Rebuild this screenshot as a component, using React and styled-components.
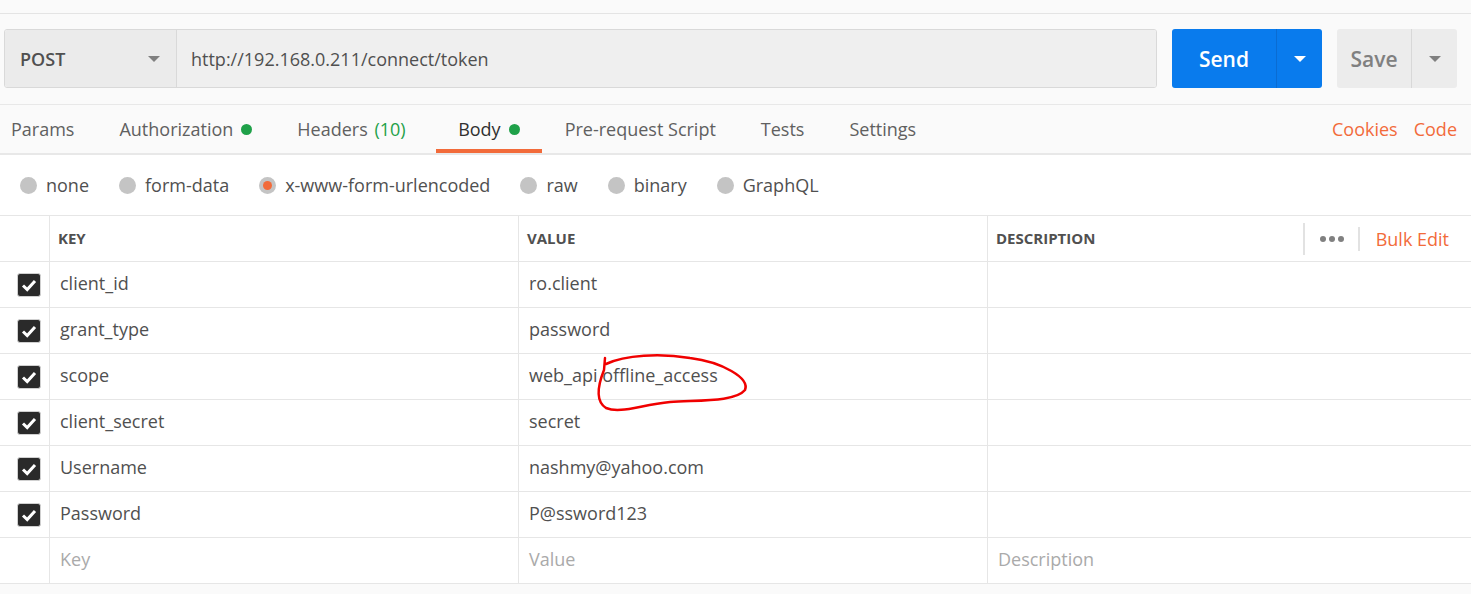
import React from "react";
import styled, { createGlobalStyle } from "styled-components";

const GlobalStyle = createGlobalStyle`
  html, body {
    margin: 0;
    padding: 0;
    background: #fafafa;
  }
  body {
    font-family: "Open Sans", "Liberation Sans", sans-serif;
    color: #505050;
  }
`;

const orange = "#f26b3a";
const green = "#1fa149";
const line = "#e6e6e6";

const Page = styled.div`
  position: relative;
  width: 1471px;
  height: 594px;
  overflow: hidden;
  background: #fafafa;
`;

const TopStrip = styled.div`
  height: 13px;
  border-bottom: 1px solid #e4e4e4;
`;

const RequestBar = styled.div`
  display: flex;
  align-items: center;
  padding: 15px 14px 16px 4px;
  border-bottom: 1px solid #e8e8e8;
`;

const UrlGroup = styled.div`
  flex: 1;
  display: flex;
  height: 59px;
  box-sizing: border-box;
  border: 1px solid #d9d9d9;
  border-radius: 3px;
  overflow: hidden;
`;

const MethodSelect = styled.div`
  width: 172px;
  box-sizing: border-box;
  display: flex;
  align-items: center;
  justify-content: space-between;
  padding: 0 16px 0 15px;
  background: #ebebeb;
  border-right: 1px solid #d9d9d9;
  font-size: 18px;
  font-weight: 600;
  color: #505050;
`;

const UrlInput = styled.div`
  flex: 1;
  display: flex;
  align-items: center;
  padding-left: 14px;
  background: #efefef;
  font-size: 18px;
  color: #505050;
`;

const Caret = styled.span`
  width: 0;
  height: 0;
  border-left: 6px solid transparent;
  border-right: 6px solid transparent;
  border-top: 6px solid ${(p) => p.color || "#808080"};
`;

const SplitButton = styled.div`
  display: flex;
  height: 59px;
  margin-left: ${(p) => p.$ml}px;
  border-radius: 3px;
  overflow: hidden;
  background: ${(p) => p.$bg};
  color: ${(p) => p.$fg};
  font-size: 21px;
  font-weight: 600;
`;

const ButtonMain = styled.div`
  width: ${(p) => p.$w}px;
  display: flex;
  align-items: center;
  justify-content: center;
  border-right: 1px solid ${(p) => p.$div};
`;

const ButtonArrow = styled.div`
  width: ${(p) => p.$w}px;
  display: flex;
  align-items: center;
  justify-content: center;
`;

const TabBar = styled.div`
  display: flex;
  align-items: stretch;
  height: 48px;
  border-bottom: 2px solid #e8e8e8;
`;

const Tab = styled.div`
  display: flex;
  align-items: center;
  gap: 8px;
  padding: 0 ${(p) => p.$pr || 22.5}px 0 22.5px;
  font-size: 18px;
  color: ${(p) => (p.$active ? "#303030" : "#606060")};
  box-shadow: ${(p) => (p.$active ? `inset 0 -4px 0 ${orange}` : "none")};
  &:first-child {
    padding-left: 11px;
  }
`;

const Dot = styled.span`
  width: 11px;
  height: 11px;
  border-radius: 50%;
  background: ${green};
`;

const Count = styled.span`
  color: ${green};
  margin-left: 2px;
`;

const Spacer = styled.div`
  flex: 1;
`;

const Link = styled.div`
  display: flex;
  align-items: center;
  color: ${orange};
  font-size: 18px;
  font-weight: 400;
  margin-right: ${(p) => p.$mr || 0}px;
`;

const RadioRow = styled.div`
  display: flex;
  align-items: center;
  height: 60px;
  padding-left: 20px;
  background: #fff;
`;

const RadioOption = styled.label`
  display: flex;
  align-items: center;
  gap: 9px;
  margin-right: 30px;
  font-size: 18px;
  color: #505050;
`;

const RadioCircle = styled.span`
  width: 17px;
  height: 17px;
  border-radius: 50%;
  background: #c4c4c4;
  display: flex;
  align-items: center;
  justify-content: center;
  &::after {
    content: "";
    width: 9px;
    height: 9px;
    border-radius: 50%;
    background: ${(p) => (p.$on ? orange : "transparent")};
  }
`;

const Table = styled.div`
  background: #fff;
  border-top: 1px solid ${line};
`;

const Row = styled.div`
  display: grid;
  grid-template-columns: 50px 469px 469px 1fr;
  height: 46px;
  box-sizing: border-box;
  border-bottom: 1px solid ${line};
`;

const Cell = styled.div`
  display: flex;
  align-items: center;
  padding-left: ${(p) => (p.$check ? 17 : 10)}px;
  padding-bottom: ${(p) => (p.$check ? 0 : 3)}px;
  border-right: 1px solid ${line};
  font-size: 18px;
  color: ${(p) => (p.$placeholder ? "#aaaaaa" : "#505050")};
  &:last-child {
    border-right: none;
  }
`;

const HeadCell = styled(Cell)`
  font-size: 15px;
  font-weight: 700;
  color: #505050;
  padding-left: 8px;
  padding-bottom: 2px;
`;

const HeadTools = styled.div`
  margin-left: auto;
  display: flex;
  align-items: center;
  height: 100%;
  padding-right: 22px;
  padding-top: 2px;
`;

const VRule = styled.span`
  width: 2px;
  height: ${(p) => p.$h}px;
  background: #e2e2e2;
  margin: 0 ${(p) => p.$mr}px 0 ${(p) => p.$ml}px;
`;

const MoreDots = styled.span`
  display: flex;
  gap: 3px;
  & > i {
    width: 6px;
    height: 6px;
    border-radius: 50%;
    background: #808080;
  }
`;

const CheckBox = styled.span`
  width: 24px;
  height: 24px;
  box-sizing: border-box;
  border: 1px solid #d0d0d0;
  border-radius: 3px;
  background: #2a2a2a;
  display: flex;
  align-items: center;
  justify-content: center;
`;

const Annotation = styled.svg`
  position: absolute;
  left: 0;
  top: 0;
  pointer-events: none;
`;

const rows = [
  ["client_id", "ro.client"],
  ["grant_type", "password"],
  ["scope", "web_api offline_access"],
  ["client_secret", "secret"],
  ["Username", "nashmy@yahoo.com"],
  ["Password", "P@ssword123"],
];

const radios = ["none", "form-data", "x-www-form-urlencoded", "raw", "binary", "GraphQL"];

const Check = () => (
  <CheckBox>
    <svg width="16" height="14" viewBox="0 0 16 14">
      <path d="M2 7.5 L6.2 11.5 L14 3" fill="none" stroke="#fff" strokeWidth="3" />
    </svg>
  </CheckBox>
);

export default function App() {
  return (
    <Page>
      <GlobalStyle />
      <TopStrip />
      <RequestBar>
        <UrlGroup>
          <MethodSelect>
            POST
            <Caret />
          </MethodSelect>
          <UrlInput>http://192.168.0.211/connect/token</UrlInput>
        </UrlGroup>
        <SplitButton $ml={15} $bg="#097bed" $fg="#fff">
          <ButtonMain $w={104} $div="#0a6cd2">Send</ButtonMain>
          <ButtonArrow $w={45}>
            <Caret color="#fff" />
          </ButtonArrow>
        </SplitButton>
        <SplitButton $ml={15} $bg="#ececec" $fg="#808080">
          <ButtonMain $w={74} $div="#d8d8d8">Save</ButtonMain>
          <ButtonArrow $w={45}>
            <Caret color="#808080" />
          </ButtonArrow>
        </SplitButton>
      </RequestBar>

      <TabBar>
        <Tab>Params</Tab>
        <Tab>
          Authorization <Dot />
        </Tab>
        <Tab $pr={30}>
          <span>
            Headers <Count>(10)</Count>
          </span>
        </Tab>
        <Tab $active>
          Body <Dot />
        </Tab>
        <Tab>Pre-request Script</Tab>
        <Tab>Tests</Tab>
        <Tab>Settings</Tab>
        <Spacer />
        <Link $mr={16}>Cookies</Link>
        <Link $mr={14}>Code</Link>
      </TabBar>

      <RadioRow>
        {radios.map((r) => (
          <RadioOption key={r}>
            <RadioCircle $on={r === "x-www-form-urlencoded"} />
            {r}
          </RadioOption>
        ))}
      </RadioRow>

      <Table>
        <Row>
          <Cell />
          <HeadCell>KEY</HeadCell>
          <HeadCell>VALUE</HeadCell>
          <HeadCell>
            DESCRIPTION
            <HeadTools>
              <VRule $h={32} $ml={0} $mr={15} />
              <MoreDots>
                <i />
                <i />
                <i />
              </MoreDots>
              <VRule $h={24} $ml={14} $mr={16} />
              <Link>Bulk Edit</Link>
            </HeadTools>
          </HeadCell>
        </Row>
        {rows.map(([k, v]) => (
          <Row key={k}>
            <Cell $check>
              <Check />
            </Cell>
            <Cell>{k}</Cell>
            <Cell>{v}</Cell>
            <Cell />
          </Row>
        ))}
        <Row>
          <Cell />
          <Cell $placeholder>Key</Cell>
          <Cell $placeholder>Value</Cell>
          <Cell $placeholder>Description</Cell>
        </Row>
      </Table>

      <Annotation width="1471" height="594">
        <path
          d="M605 358 L604 370 C598 385, 595 401, 606 408 C620 414, 640 405, 670 402 C700 400, 735 402, 745 390 C750 378, 722 362, 690 358 C660 353, 625 355, 606 364"
          fill="none"
          stroke="#f00000"
          strokeWidth="2.5"
          strokeLinecap="round"
          strokeLinejoin="round"
        />
      </Annotation>
    </Page>
  );
}
